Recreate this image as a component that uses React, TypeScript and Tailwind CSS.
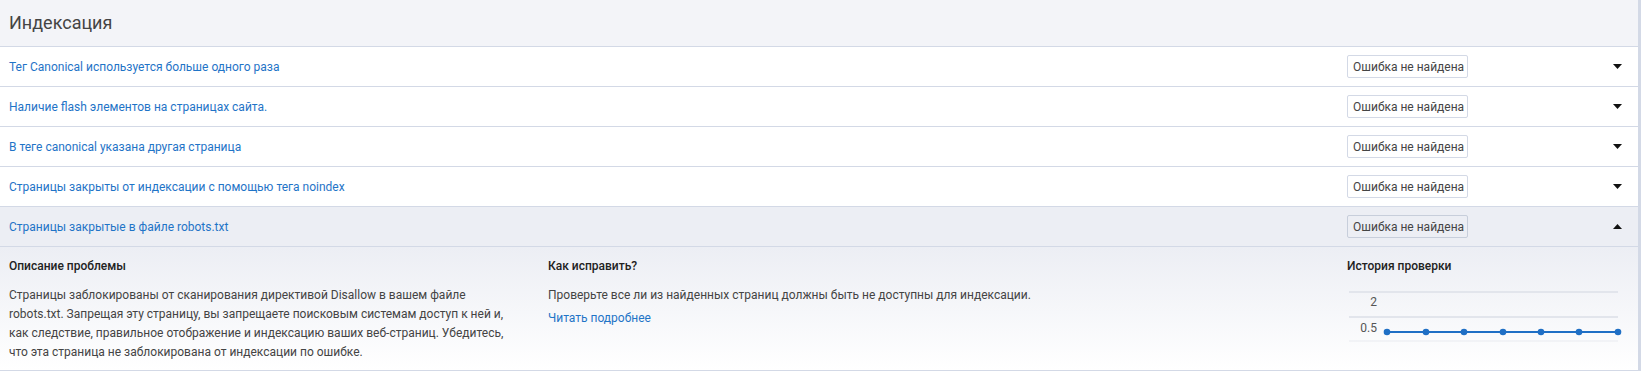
import React from 'react';

type Row = { title: string; open?: boolean };

const rows: Row[] = [
  { title: 'Тег Canonical используется больше одного раза' },
  { title: 'Наличие flash элементов на страницах сайта.' },
  { title: 'В теге canonical указана другая страница' },
  { title: 'Страницы закрыты от индексации с помощью тега noindex' },
  { title: 'Страницы закрытые в файле robots.txt', open: true },
];

const Caret: React.FC<{ up?: boolean }> = ({ up }) => (
  <svg width="9" height="5" viewBox="0 0 9 5" className="block">
    {up ? <polygon points="0,5 9,5 4.5,0" fill="#111" /> : <polygon points="0,0 9,0 4.5,5" fill="#111" />}
  </svg>
);

const HistoryChart: React.FC = () => {
  const xs = [40, 79, 117, 156, 194, 232, 271];
  return (
    <svg width="271" height="60" viewBox="0 0 271 60" className="overflow-visible block">
      <line x1="2" y1="7" x2="271" y2="7" stroke="#e2e5ec" strokeWidth="2" />
      <line x1="2" y1="32" x2="271" y2="32" stroke="#e2e5ec" strokeWidth="2" />
      <line x1="2" y1="56" x2="271" y2="56" stroke="#e9ebf0" strokeWidth="1" />
      <text x="30" y="21" textAnchor="end" fontSize="12" fill="#555" fontFamily="Roboto, sans-serif">2</text>
      <text x="30" y="47" textAnchor="end" fontSize="12" fill="#555" fontFamily="Roboto, sans-serif">0.5</text>
      <polyline points={xs.map((x) => `${x},47`).join(' ')} fill="none" stroke="#1f6fc5" strokeWidth="2" />
      {xs.map((x) => (
        <circle key={x} cx={x} cy="47" r="3.3" fill="#1f6fc5" />
      ))}
    </svg>
  );
};

export default function App() {
  return (
    <div className="flex w-[1641px] bg-white" style={{ fontFamily: 'Roboto, "Noto Sans", sans-serif' }}>
      <div className="w-[1638px]">
        {/* header */}
        <div className="h-[47px] flex items-center px-[9px] bg-[#f3f4f8] border-b border-[#d3d9e6]">
          <h2 className="text-[18px] text-[#444] leading-none">Индексация</h2>
        </div>

        {rows.map((r) => (
          <div
            key={r.title}
            className={`h-[40px] flex items-center pl-[9px] pr-[16px] border-b border-[#d3d9e6] ${r.open ? 'bg-[#eceef4]' : 'bg-white'}`}
          >
            <div className="flex-1 text-[12px] text-[#1f74c7]">{r.title}</div>
            <div
              className={`w-[121px] h-[23px] flex items-center px-[5px] whitespace-nowrap text-[12px] text-[#444] border rounded-[2px] ${r.open ? 'bg-[#eceef4] border-[#c7cedb]' : 'bg-white border-[#d3d9e6]'}`}
            >
              Ошибка не найдена
            </div>
            <div className="w-[154px] flex justify-end">
              <Caret up={r.open} />
            </div>
          </div>
        ))}

        {/* expanded details */}
        <div className="h-[124px] flex pl-[9px] pt-[10px] border-b border-[#d3d9e6] bg-gradient-to-b from-[#eceef4] to-white">
          <div className="w-[539px] pr-[39px]">
            <div className="text-[12px] leading-[19px] text-[#222] font-medium">Описание проблемы</div>
            <p className="mt-[10px] text-[12px] leading-[19px] text-[#444]">
              Страницы заблокированы от сканирования директивой Disallow в вашем файле
              <br />
              robots.txt. Запрещая эту страницу, вы запрещаете поисковым системам доступ к ней и, как следствие, правильное отображение и индексацию ваших веб-страниц. Убедитесь, что эта страница не заблокирована от индексации по ошибке.
            </p>
          </div>
          <div className="w-[799px]">
            <div className="text-[12px] leading-[19px] text-[#222] font-medium">Как исправить?</div>
            <p className="mt-[10px] text-[12px] leading-[19px] text-[#444]">
              Проверьте все ли из найденных страниц должны быть не доступны для индексации.
            </p>
            <a className="text-[12px] leading-[19px] text-[#1f74c7]">Читать подробнее</a>
          </div>
          <div className="w-[271px]">
            <div className="text-[12px] leading-[19px] text-[#222] font-medium">История проверки</div>
            <div className="mt-[9px]">
              <HistoryChart />
            </div>
          </div>
        </div>
      </div>
      <div className="w-[3px] bg-[#d3d9e6]" />
    </div>
  );
}
